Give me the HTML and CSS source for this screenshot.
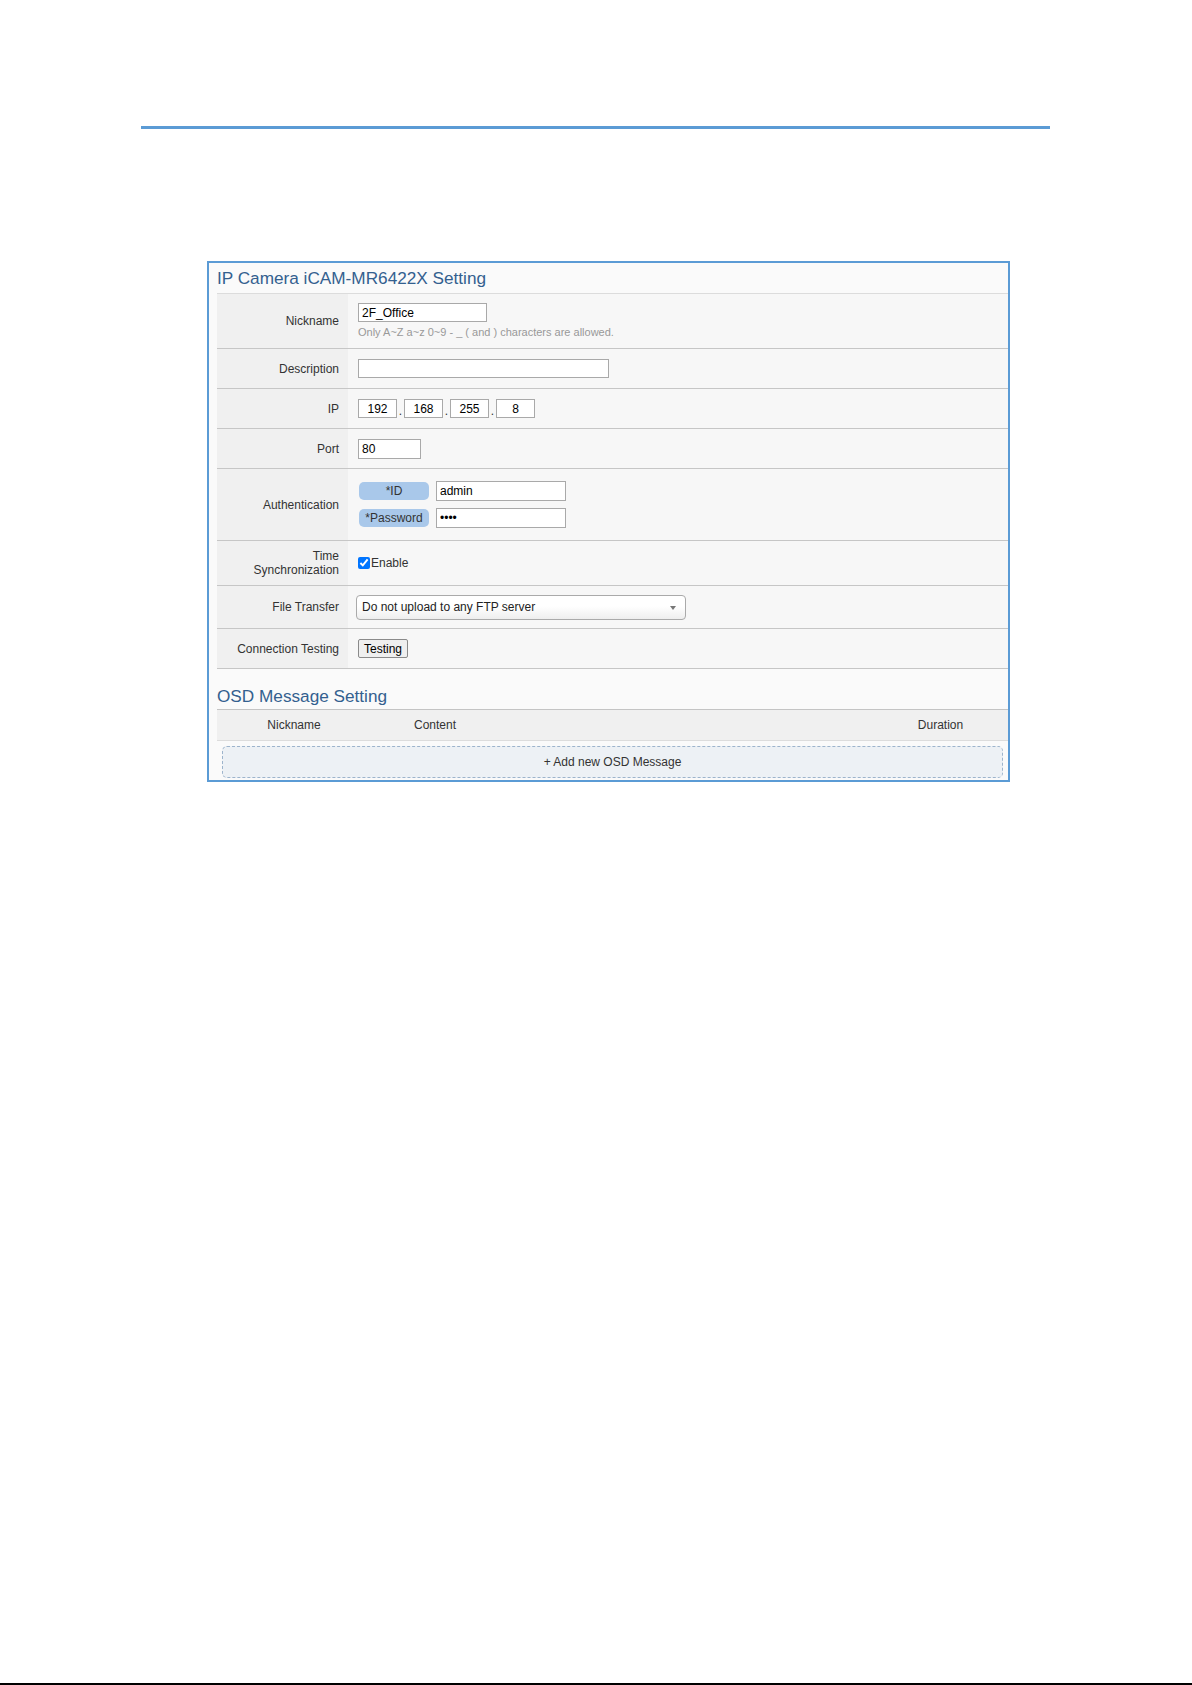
FILE: index.html
```html
<!doctype html>
<html>
<head>
<meta charset="utf-8">
<title>IP Camera Setting</title>
<link rel="stylesheet" href="styles.css">
</head>
<body>
<div class="page">
  <div class="rule"></div>

  <div class="panel">
    <h2 class="panel-title">IP Camera iCAM-MR6422X Setting</h2>

    <div class="form">
      <div class="row row-nick">
        <div class="label">Nickname</div>
        <div class="value">
          <input class="text w-nick" type="text" value="2F_Office">
          <div class="hint">Only A~Z a~z 0~9 - _ ( and ) characters are allowed.</div>
        </div>
      </div>

      <div class="row">
        <div class="label">Description</div>
        <div class="value">
          <input class="text w-desc" type="text" value="">
        </div>
      </div>

      <div class="row">
        <div class="label">IP</div>
        <div class="value">
          <div class="ip">
            <input class="text octet" type="text" value="192"><span class="dot">.</span>
            <input class="text octet" type="text" value="168"><span class="dot">.</span>
            <input class="text octet" type="text" value="255"><span class="dot">.</span>
            <input class="text octet" type="text" value="8">
          </div>
        </div>
      </div>

      <div class="row">
        <div class="label">Port</div>
        <div class="value">
          <input class="text w-port" type="text" value="80">
        </div>
      </div>

      <div class="row row-auth">
        <div class="label">Authentication</div>
        <div class="value">
          <div class="auth">
            <span class="badge">*ID</span>
            <input class="text w-auth" type="text" value="admin">
          </div>
          <div class="auth">
            <span class="badge">*Password</span>
            <input class="text w-auth" type="password" value="1234">
          </div>
        </div>
      </div>

      <div class="row row-time">
        <div class="label">Time<br>Synchronization</div>
        <div class="value">
          <label class="check"><input type="checkbox" checked>Enable</label>
        </div>
      </div>

      <div class="row row-file">
        <div class="label">File Transfer</div>
        <div class="value">
          <div class="select">
            <select>
              <option>Do not upload to any FTP server</option>
            </select>
          </div>
        </div>
      </div>

      <div class="row">
        <div class="label">Connection Testing</div>
        <div class="value">
          <button class="btn">Testing</button>
        </div>
      </div>
    </div>

    <h2 class="panel-title sub">OSD Message Setting</h2>
    <div class="osd-head">
      <span class="col-nick">Nickname</span>
      <span class="col-content">Content</span>
      <span class="col-dur">Duration</span>
    </div>
    <div class="add-btn">+ Add new OSD Message</div>
  </div>

  <div class="page-end"></div>
</div>
</body>
</html>
```

FILE: styles.css
```css
html, body {
  margin: 0;
  padding: 0;
}
body {
  background: #fff;
  color: #333;
  font-family: Arial, "Liberation Sans", Helvetica, sans-serif;
  font-size: 12px;
}
.page {
  min-height: 1685px;
  padding-top: 126px;
  box-sizing: border-box;
  display: flex;
  flex-direction: column;
}
.rule {
  margin-left: 141px;
  width: 909px;
  height: 3px;
  background: #5b9bd5;
}
.page-end {
  margin-top: auto;
  height: 2px;
  background: #000;
}

/* panel */
.panel {
  margin: 132px 0 0 207px;
  width: 803px;
  box-sizing: border-box;
  border: 2px solid #5b9bd5;
  padding: 0 0 2px 8px;
  background: #fafafa;
}
.panel-title {
  margin: 0;
  padding-top: 1px;
  padding-bottom: 1px;
  line-height: 28px;
  font-size: 17.2px;
  font-weight: normal;
  color: #33608f;
  border-bottom: 1px solid #dcdcdc;
}
.panel-title.sub {
  padding-top: 17px;
  line-height: 20px;
  padding-bottom: 3px;
  border-bottom-color: #c4c4c4;
}

/* form rows */
.row {
  display: flex;
  min-height: 39px;
  border-bottom: 1px solid #c6c6c6;
  background: #f7f7f7;
}
.row-nick { min-height: 54px; }
.row-auth { min-height: 71px; }
.row-time { min-height: 44px; }
.row-file { min-height: 42px; }
.label {
  width: 131px;
  box-sizing: border-box;
  padding-right: 9px;
  background: #f0f0f0;
  display: flex;
  align-items: center;
  justify-content: flex-end;
  text-align: right;
  line-height: 14px;
}
.value {
  flex: 1;
  padding-left: 10px;
  display: flex;
  flex-direction: column;
  justify-content: center;
  align-items: flex-start;
}
.text {
  box-sizing: border-box;
  height: 19px;
  margin: 0;
  padding: 0 3px;
  border: 1px solid #a9a9a9;
  background: #fff;
  font-family: inherit;
  font-size: 12px;
  color: #000;
  outline: none;
}
.w-nick { width: 129px; }
.w-desc { width: 251px; }
.w-port { width: 63px; height: 20px; }
.w-auth { width: 130px; height: 20px; }
.hint {
  margin-top: 3px;
  font-size: 11px;
  line-height: 14px;
  color: #999;
}

.ip {
  display: flex;
  align-items: flex-end;
}
.octet {
  width: 39px;
  text-align: center;
}
.dot {
  width: 7px;
  text-align: center;
  line-height: 14px;
}

.auth {
  display: flex;
  align-items: center;
  gap: 7px;
}
.auth + .auth {
  margin-top: 7px;
}
.badge {
  width: 70px;
  height: 18px;
  margin-left: 1px;
  line-height: 18px;
  text-align: center;
  background: #a9c8ea;
  border-radius: 5px;
  color: #333;
}

.check {
  display: flex;
  align-items: center;
  color: #333;
}
.check input {
  width: 12px;
  height: 12px;
  margin: 0 1px 0 0;
  accent-color: #0075ff;
}

.select {
  position: relative;
  margin-left: -2px;
}
.select select {
  width: 330px;
  height: 25px;
  padding: 0 20px 0 5px;
  border: 1px solid #aaa;
  border-radius: 4px;
  background: linear-gradient(#fff, #fff 45%, #eee);
  font-family: inherit;
  font-size: 12px;
  color: #222;
  -webkit-appearance: none;
  appearance: none;
  outline: none;
}
.select::after {
  content: "";
  position: absolute;
  right: 10px;
  top: 11px;
  border-left: 3px solid transparent;
  border-right: 3px solid transparent;
  border-top: 4px solid #777;
}

.btn {
  height: 19px;
  margin: 0;
  padding: 0 5px;
  border: 1px solid #8a8a8a;
  border-radius: 2px;
  background: #efefef;
  font-family: inherit;
  font-size: 12px;
  color: #000;
}

/* OSD table */
.osd-head {
  display: grid;
  grid-template-columns: 154px 1fr 135px;
  height: 30px;
  line-height: 30px;
  background: #f0f0f0;
  border-bottom: 1px solid #dcdcdc;
}
.col-nick, .col-dur {
  text-align: center;
}
.col-content {
  padding-left: 43px;
}
.add-btn {
  margin: 5px 5px 0 5px;
  height: 32px;
  box-sizing: border-box;
  line-height: 30px;
  text-align: center;
  border: 1px dashed #9db4cc;
  border-radius: 5px;
  background: #edf1f5;
  color: #333;
}
```
